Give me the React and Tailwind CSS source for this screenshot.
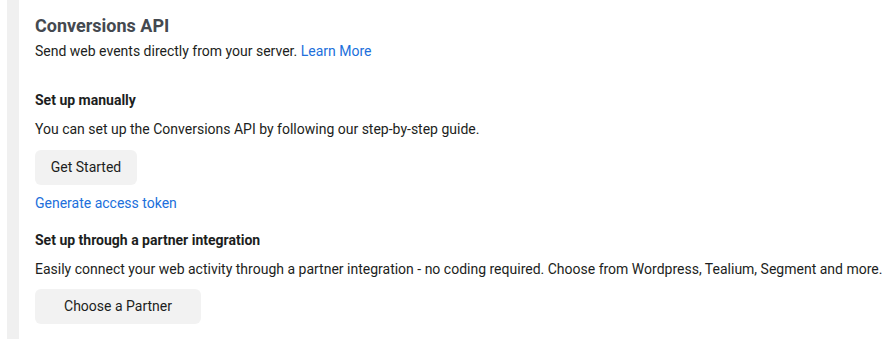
export default function App() {
  return (
    <div className="w-[892px] h-[339px] bg-white flex overflow-hidden" style={{ fontFamily: 'Roboto, "Liberation Sans", sans-serif' }}>
      <div className="w-[7px] shrink-0 bg-white" />
      <div className="w-[12px] shrink-0 bg-[#f0f0f0]" />
      <div className="flex flex-col pl-[16px] pt-[13px] text-[14px] text-[#1c1e21]">
        <h1 className="text-[18px] leading-[26px] font-bold text-[#444950]">Conversions API</h1>
        <p className="mt-[3px] leading-[18px]">
          Send web events directly from your server. <a className="text-[#216fdb]">Learn More</a>
        </p>
        <h2 className="mt-[31px] leading-[18px] font-bold">Set up manually</h2>
        <p className="mt-[11px] leading-[18px]">You can set up the Conversions API by following our step-by-step guide.</p>
        <div className="mt-[12px]">
          <button className="h-[35px] w-[102px] rounded-[6px] bg-[#f2f2f2] text-[#1c1e21]">Get Started</button>
        </div>
        <a className="mt-[9px] leading-[18px] text-[#216fdb]">Generate access token</a>
        <h2 className="mt-[19px] leading-[18px] font-bold">Set up through a partner integration</h2>
        <p className="mt-[11px] leading-[18px]">Easily connect your web activity through a partner integration - no coding required. Choose from Wordpress, Tealium, Segment and more.</p>
        <div className="mt-[11px]">
          <button className="h-[35px] w-[166px] rounded-[6px] bg-[#f2f2f2] text-[#1c1e21]">Choose a Partner</button>
        </div>
      </div>
    </div>
  );
}
